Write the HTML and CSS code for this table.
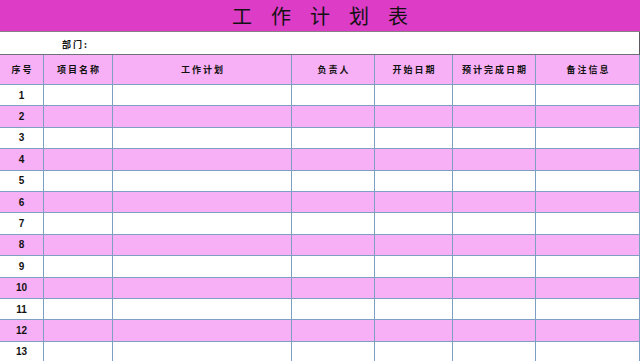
FILE: index.html
```html
<!DOCTYPE html>
<html lang="zh">
<head>
<meta charset="utf-8">
<title>工作计划表</title>
<link rel="stylesheet" href="styles.css">
</head>
<body>
<div class="sheet">
  <div class="title">工作计划表</div>
  <div class="dept"><span class="dept-label">部门:</span></div>
  <div class="grid">
    <div class="hd">序号</div>
    <div class="hd">项目名称</div>
    <div class="hd">工作计划</div>
    <div class="hd">负责人</div>
    <div class="hd">开始日期</div>
    <div class="hd">预计完成日期</div>
    <div class="hd">备注信息</div>

    <div class="num">1</div><div></div><div></div><div></div><div></div><div></div><div></div>
    <div class="num p">2</div><div class="p"></div><div class="p"></div><div class="p"></div><div class="p"></div><div class="p"></div><div class="p"></div>
    <div class="num">3</div><div></div><div></div><div></div><div></div><div></div><div></div>
    <div class="num p">4</div><div class="p"></div><div class="p"></div><div class="p"></div><div class="p"></div><div class="p"></div><div class="p"></div>
    <div class="num">5</div><div></div><div></div><div></div><div></div><div></div><div></div>
    <div class="num p">6</div><div class="p"></div><div class="p"></div><div class="p"></div><div class="p"></div><div class="p"></div><div class="p"></div>
    <div class="num">7</div><div></div><div></div><div></div><div></div><div></div><div></div>
    <div class="num p">8</div><div class="p"></div><div class="p"></div><div class="p"></div><div class="p"></div><div class="p"></div><div class="p"></div>
    <div class="num">9</div><div></div><div></div><div></div><div></div><div></div><div></div>
    <div class="num p">10</div><div class="p"></div><div class="p"></div><div class="p"></div><div class="p"></div><div class="p"></div><div class="p"></div>
    <div class="num">11</div><div></div><div></div><div></div><div></div><div></div><div></div>
    <div class="num p">12</div><div class="p"></div><div class="p"></div><div class="p"></div><div class="p"></div><div class="p"></div><div class="p"></div>
    <div class="num">13</div><div></div><div></div><div></div><div></div><div></div><div></div>
  </div>
</div>
</body>
</html>
```

FILE: styles.css
```css
html, body {
  margin: 0;
  padding: 0;
  background: #ffffff;
  overflow: hidden;
}
body {
  width: 640px;
  height: 361px;
  font-family: "Noto Sans CJK SC", "Liberation Sans", sans-serif;
}
.sheet {
  display: flex;
  flex-direction: column;
}
.title {
  height: 31px;
  background: #dc3cc6;
  border-bottom: 1px solid #8a7f88;
  display: flex;
  align-items: center;
  justify-content: center;
  font-family: "Noto Sans CJK SC", sans-serif;
  font-size: 20px;
  font-weight: 400;
  letter-spacing: 19px;
  padding-left: 19px;
  color: #111111;
  line-height: 1;
}
.dept {
  height: 20px;
  border-bottom: 1px solid #6f6f78;
  border-right: 1px solid #5a5a60;
  display: flex;
  align-items: center;
  padding-left: 62px;
  padding-top: 2px;
  box-sizing: content-box;
}
.dept-label {
  font-size: 9px;
  font-weight: 700;
  letter-spacing: 2px;
  color: #111111;
}
.grid {
  display: grid;
  grid-template-columns: 43px 68px 178px 82px 77px 82px 103px;
  grid-template-rows: 29px;
  grid-auto-rows: 20.4px;
  gap: 1px;
  background: #7f9fc2;
  padding-right: 1px;
  width: 640px;
  box-sizing: border-box;
}
.grid > div {
  background: #ffffff;
}
.grid > div.p {
  background: #f7b0f5;
}
.grid > div.hd {
  background: #f7b0f5;
  display: flex;
  align-items: center;
  justify-content: center;
  font-size: 9px;
  font-weight: 700;
  letter-spacing: 2px;
  padding-left: 2px;
  color: #111111;
}
.grid > div.num {
  display: flex;
  align-items: center;
  justify-content: center;
  font-family: "Liberation Sans", sans-serif;
  font-size: 10px;
  font-weight: 700;
  color: #111111;
}
```
